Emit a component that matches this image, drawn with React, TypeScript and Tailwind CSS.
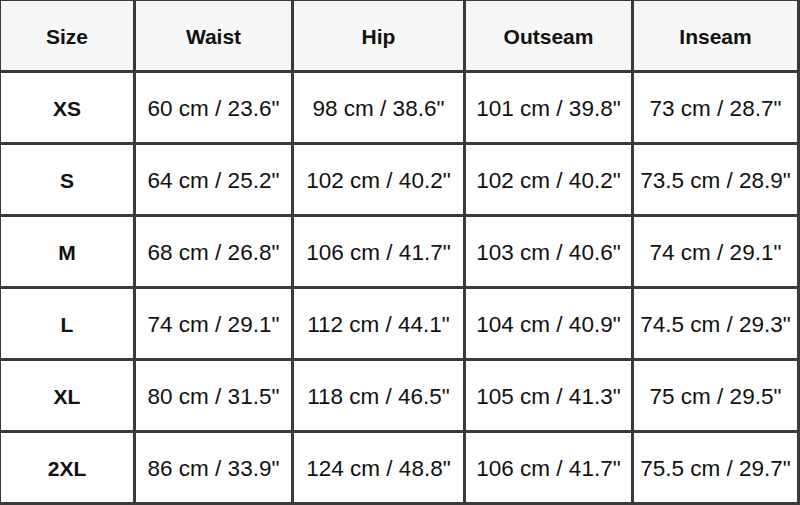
import React from "react";

const headers = ["Size", "Waist", "Hip", "Outseam", "Inseam"];
const rows: string[][] = [
  ["XS", '60 cm / 23.6"', '98 cm / 38.6"', '101 cm / 39.8"', '73 cm / 28.7"'],
  ["S", '64 cm / 25.2"', '102 cm / 40.2"', '102 cm / 40.2"', '73.5 cm / 28.9"'],
  ["M", '68 cm / 26.8"', '106 cm / 41.7"', '103 cm / 40.6"', '74 cm / 29.1"'],
  ["L", '74 cm / 29.1"', '112 cm / 44.1"', '104 cm / 40.9"', '74.5 cm / 29.3"'],
  ["XL", '80 cm / 31.5"', '118 cm / 46.5"', '105 cm / 41.3"', '75 cm / 29.5"'],
  ["2XL", '86 cm / 33.9"', '124 cm / 48.8"', '106 cm / 41.7"', '75.5 cm / 29.7"'],
];

export default function App() {
  return (
    <div className="w-[800px] h-[505px] overflow-hidden bg-white" style={{ fontFamily: '"Liberation Sans", Arial, sans-serif' }}>
      <div className="grid grid-cols-[132px_155px_169px_165px_163px] auto-rows-[69px] gap-[3px] bg-[#3a3a3a] pt-[1px] pl-[1px] pr-[3px] pb-[3px] text-[#111]">
        {headers.map((h) => (
          <div key={h} className="bg-[#f7f7f7] flex items-center justify-center pt-[3px] font-bold text-[21px]">
            {h}
          </div>
        ))}
        {rows.map((r) =>
          r.map((c, i) => (
            <div
              key={r[0] + i}
              className={
                i === 0
                  ? "bg-white flex items-center justify-center pt-[2px] font-bold text-[21px]"
                  : "bg-white flex items-center justify-center pt-[2px] text-[22.5px] whitespace-nowrap"
              }
            >
              {c}
            </div>
          ))
        )}
      </div>
    </div>
  );
}
